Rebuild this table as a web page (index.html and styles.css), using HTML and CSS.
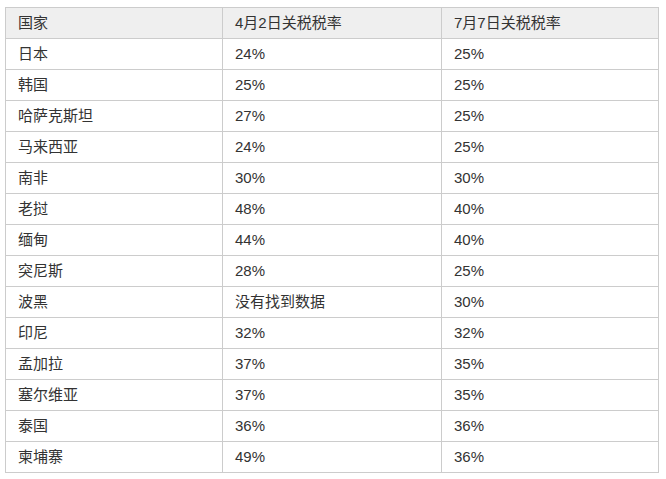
FILE: index.html
```html
<!DOCTYPE html>
<html lang="zh">
<head>
<meta charset="utf-8">
<link rel="stylesheet" href="styles.css">
</head>
<body>
<table class="tariff">
  <colgroup><col class="c1"><col class="c2"><col class="c3"></colgroup>
  <thead>
    <tr><th>国家</th><th>4月2日关税税率</th><th>7月7日关税税率</th></tr>
  </thead>
  <tbody>
    <tr><td>日本</td><td>24%</td><td>25%</td></tr>
    <tr><td>韩国</td><td>25%</td><td>25%</td></tr>
    <tr><td>哈萨克斯坦</td><td>27%</td><td>25%</td></tr>
    <tr><td>马来西亚</td><td>24%</td><td>25%</td></tr>
    <tr><td>南非</td><td>30%</td><td>30%</td></tr>
    <tr><td>老挝</td><td>48%</td><td>40%</td></tr>
    <tr><td>缅甸</td><td>44%</td><td>40%</td></tr>
    <tr><td>突尼斯</td><td>28%</td><td>25%</td></tr>
    <tr><td>波黑</td><td>没有找到数据</td><td>30%</td></tr>
    <tr><td>印尼</td><td>32%</td><td>32%</td></tr>
    <tr><td>孟加拉</td><td>37%</td><td>35%</td></tr>
    <tr><td>塞尔维亚</td><td>37%</td><td>35%</td></tr>
    <tr><td>泰国</td><td>36%</td><td>36%</td></tr>
    <tr><td>柬埔寨</td><td>49%</td><td>36%</td></tr>
  </tbody>
</table>
</body>
</html>
```
FILE: styles.css
```css
html, body {
  margin: 0;
  background: #ffffff;
}
body {
  padding: 7px 7px 0 5px;
  font-family: "Liberation Sans", "Noto Sans CJK SC", sans-serif;
  font-size: 15px;
  color: #333333;
}
.tariff {
  border-collapse: collapse;
  width: 653px;
  table-layout: fixed;
}
.tariff .c1 { width: 217px; }
.tariff .c2 { width: 219px; }
.tariff .c3 { width: 217px; }
.tariff th,
.tariff td {
  border: 1px solid #cccccc;
  height: 31px;
  padding: 0 12px;
  text-align: left;
  font-weight: normal;
  vertical-align: middle;
  line-height: 20px;
  box-sizing: border-box;
}
.tariff th {
  background: #efefef;
}
```
